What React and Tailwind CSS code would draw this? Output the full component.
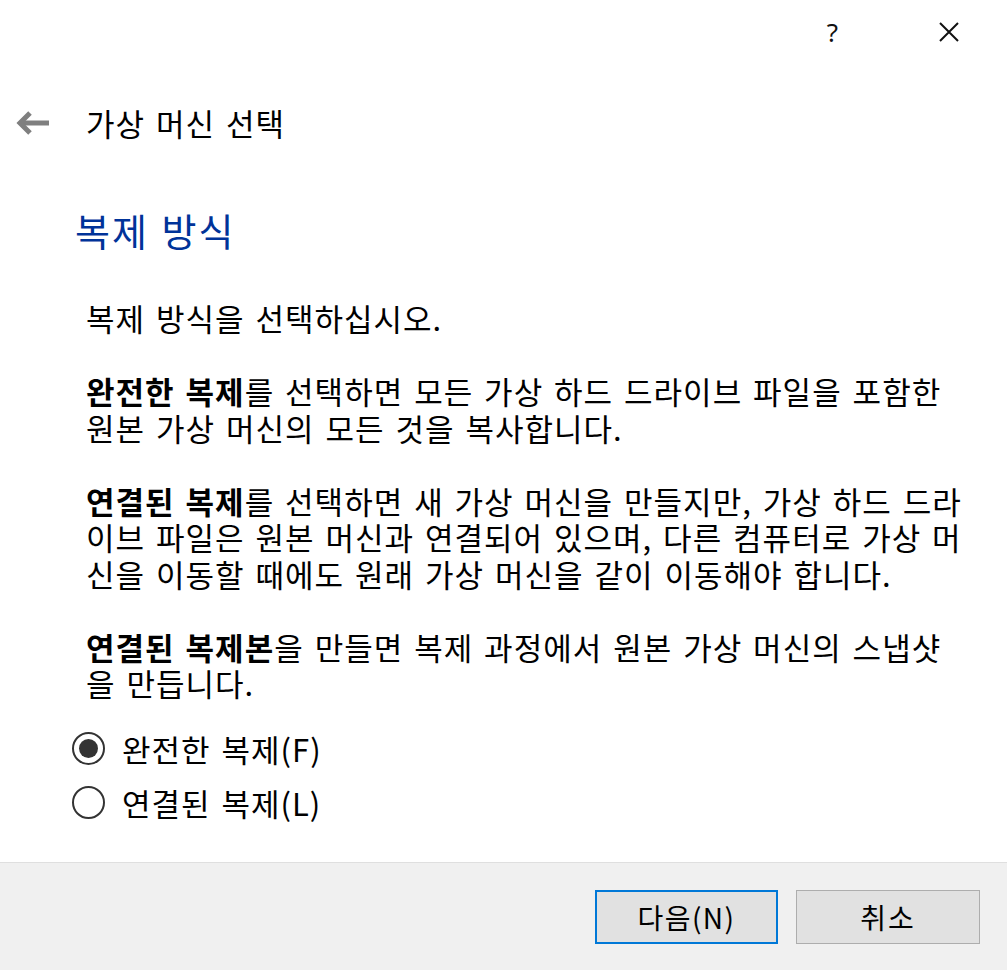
import React from "react";

function BackArrow() {
  return (
    <svg width="34" height="26" viewBox="0 0 34 26" className="block">
      <path d="M33 13 H5" stroke="#7f7f7f" strokeWidth="5" fill="none" />
      <path d="M14 3 L4 13 L14 23" stroke="#7f7f7f" strokeWidth="5" fill="none" strokeLinejoin="miter" />
    </svg>
  );
}

function CloseIcon() {
  return (
    <svg width="20" height="20" viewBox="0 0 20 20" className="block">
      <path d="M1 1 L19 19 M19 1 L1 19" stroke="#111" strokeWidth="2" fill="none" />
    </svg>
  );
}

function Radio({ checked, label }) {
  return (
    <div className="flex items-center h-[40px]">
      <div className="w-[33px] h-[33px] rounded-full border-2 border-[#333333] flex items-center justify-center">
        {checked && <div className="w-[19px] h-[19px] rounded-full bg-[#333333]" />}
      </div>
      <span className="ml-[17px] text-[31px] leading-[40px] tracking-[1px] [word-spacing:3px] text-black">
        {label}
      </span>
    </div>
  );
}

export default function App() {
  const line = "block whitespace-nowrap";
  return (
    <div className="w-full h-[970px] bg-white flex flex-col font-['Noto_Sans_CJK_KR',sans-serif] text-black">
      <div className="h-[64px] flex items-center justify-end">
        <span className="font-['Noto_Sans',sans-serif] text-[26px] leading-none text-[#111] mr-[101px]">?</span>
        <div className="mr-[48px]">
          <CloseIcon />
        </div>
      </div>

      <div className="mt-[36px] h-[46px] flex items-center">
        <div className="ml-[16px]">
          <BackArrow />
        </div>
        <span className="ml-[36px] text-[31px] leading-[46px] tracking-[1px] [word-spacing:3px]">
          가상 머신 선택
        </span>
      </div>

      <div className="mt-[60px] h-[48px] flex items-center pl-[75px]">
        <span className="text-[38px] leading-[48px] tracking-[2px] [word-spacing:2px] text-[#003399]">
          복제 방식
        </span>
      </div>

      <div className="mt-[46px] pl-[86px] text-[31px] leading-[36.5px] tracking-[1px] [word-spacing:3px]">
        <p className={line}>복제 방식을 선택하십시오.</p>
        <p className="mt-[36.5px]">
          <span className={line}>
            <b className="font-bold">완전한 복제</b>를 선택하면 모든 가상 하드 드라이브 파일을 포함한
          </span>
          <span className={line}>원본 가상 머신의 모든 것을 복사합니다.</span>
        </p>
        <p className="mt-[36.5px]">
          <span className={line}>
            <b className="font-bold">연결된 복제</b>를 선택하면 새 가상 머신을 만들지만, 가상 하드 드라
          </span>
          <span className={line}>이브 파일은 원본 머신과 연결되어 있으며, 다른 컴퓨터로 가상 머</span>
          <span className={line}>신을 이동할 때에도 원래 가상 머신을 같이 이동해야 합니다.</span>
        </p>
        <p className="mt-[36.5px]">
          <span className={line}>
            <b className="font-bold">연결된 복제본</b>을 만들면 복제 과정에서 원본 가상 머신의 스냅샷
          </span>
          <span className={line}>을 만듭니다.</span>
        </p>
      </div>

      <div className="mt-[27px] pl-[72px] flex flex-col gap-[14px]">
        <Radio checked label="완전한 복제(F)" />
        <Radio label="연결된 복제(L)" />
      </div>

      <div className="mt-auto h-[108px] border-t border-[#dfdfdf] bg-[#f0f0f0] flex justify-end items-start pt-[27px] pr-[27px] gap-[18px]">
        <button className="w-[183px] h-[54px] bg-[#e1e1e1] border-2 border-[#0078d7] text-[28px] tracking-[1.5px] text-black flex items-center justify-center">
          다음(N)
        </button>
        <button className="w-[184px] h-[54px] bg-[#e1e1e1] border border-[#adadad] text-[28px] tracking-[2px] text-black flex items-center justify-center">
          취소
        </button>
      </div>
    </div>
  );
}
